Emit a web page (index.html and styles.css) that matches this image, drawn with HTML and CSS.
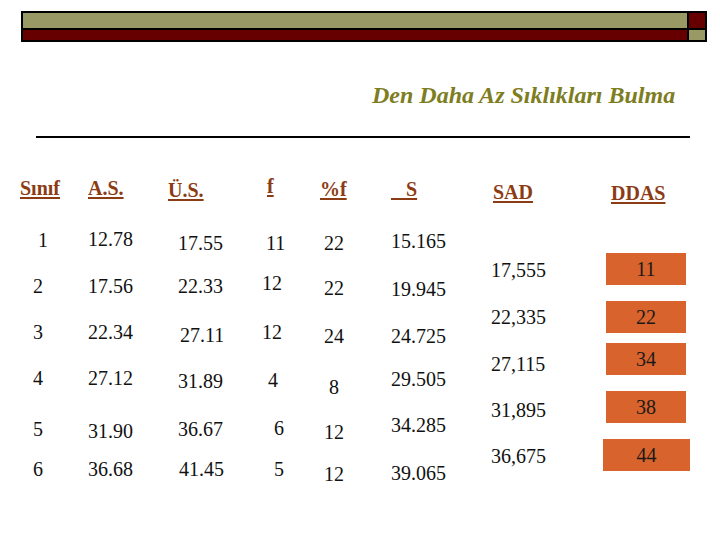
FILE: index.html
```html
<!DOCTYPE html>
<html lang="tr">
<head>
<meta charset="utf-8">
<title>Den Daha Az Sıklıkları Bulma</title>
<link rel="stylesheet" href="styles.css">
</head>
<body>
<div class="slide">
  <div class="topbar">
    <div class="olive"></div>
    <div class="maroon"></div>
    <div class="maroon"></div>
    <div class="olive"></div>
  </div>

  <h1 class="title">Den Daha Az Sıklıkları Bulma</h1>
  <hr class="rule">

  <div class="table">
    <div class="freq">
      <div class="th">Sınıf</div>
      <div class="th">A.S.</div>
      <div class="th y2">Ü.S.</div>
      <div class="th x3 yn2">f</div>
      <div class="th y1">%f</div>
      <div class="th y1">&nbsp;&nbsp;&nbsp;S</div>

      <div class="td c1 one">1</div>
      <div class="td yn1">12.78</div>
      <div class="td c3 y3">17.55</div>
      <div class="td x2 y3">11</div>
      <div class="td c5 y3">22</div>
      <div class="td y1">15.165</div>

      <div class="td c1">2</div>
      <div class="td">17.56</div>
      <div class="td c3">22.33</div>
      <div class="td xn2 yn3">12</div>
      <div class="td c5 y2">22</div>
      <div class="td y3">19.945</div>

      <div class="td c1">3</div>
      <div class="td">22.34</div>
      <div class="td c3 x2 y3">27.11</div>
      <div class="td xn2">12</div>
      <div class="td c5 y4">24</div>
      <div class="td y4">24.725</div>

      <div class="td c1">4</div>
      <div class="td">27.12</div>
      <div class="td c3 y3">31.89</div>
      <div class="td x4 y2">4</div>
      <div class="td c5 x5 y9">8</div>
      <div class="td y1">29.505</div>

      <div class="td c1 y5">5</div>
      <div class="td y7">31.90</div>
      <div class="td c3 y5">36.67</div>
      <div class="td x10 y4">6</div>
      <div class="td c5 y8">12</div>
      <div class="td y1">34.285</div>

      <div class="td c1 yn1">6</div>
      <div class="td yn1">36.68</div>
      <div class="td c3 x1 yn1">41.45</div>
      <div class="td x10 yn1">5</div>
      <div class="td c5 y4">12</div>
      <div class="td y3">39.065</div>
    </div>

    <div class="sad">
      <div class="th">SAD</div>
      <div class="sad-list">
        <div>17,555</div>
        <div>22,335</div>
        <div>27,115</div>
        <div class="yn1">31,895</div>
        <div class="yn1">36,675</div>
      </div>
    </div>

    <div class="ddas">
      <div class="th">DDAS</div>
      <div class="boxes">
        <div class="box">11</div>
        <div class="box">22</div>
        <div class="box pull-up">34</div>
        <div class="box">38</div>
        <div class="box wide">44</div>
      </div>
    </div>
  </div>
</div>
</body>
</html>
```
FILE: styles.css
```css
* { box-sizing: border-box; }

html, body {
  margin: 0;
  padding: 0;
  background: #ffffff;
}

body {
  width: 720px;
  height: 540px;
  overflow: hidden;
  font-family: "Liberation Serif", "Times New Roman", serif;
  color: #111111;
}

/* top decorative bar */
.topbar {
  margin: 11px 0 0 21px;
  width: 686px;
  padding: 2px;
  background: #000000;
  display: grid;
  grid-template-columns: 1fr 16px;
  grid-template-rows: 15px 10px;
  gap: 2px;
}
.olive { background: #999966; }
.maroon { background: #660000; }

/* title */
.title {
  margin: 39px 0 0 372px;
  font-size: 24px;
  line-height: 28px;
  font-weight: bold;
  font-style: italic;
  color: #7d7d22;
  white-space: nowrap;
}

.rule {
  margin: 27px 0 0 36px;
  width: 654px;
  height: 2px;
  border: 0;
  background: #000000;
}

/* table area */
.table {
  display: flex;
  margin: 35px 0 0 20px;
  font-size: 20px;
}

.freq {
  display: grid;
  grid-template-columns: 68px 80px 96px 56px 71px 100px;
  grid-template-rows: 44px repeat(6, 46px);
  align-items: start;
}

.th {
  font-weight: bold;
  color: #8c3c14;
  text-decoration: underline;
  text-decoration-thickness: 2px;
  text-underline-offset: 2px;
  line-height: 30px;
  white-space: pre;
}

.td {
  line-height: 46px;
  white-space: nowrap;
}

/* column indents */
.c1 { padding-left: 13px; }
.c1.one { padding-left: 18px; }
.c3 { padding-left: 10px; }
.c5 { padding-left: 4px; }

/* small nudges of hand-placed values */
.x1 { margin-left: 1px; }
.x2 { margin-left: 2px; }
.x3 { margin-left: 3px; }
.x4 { margin-left: 4px; }
.x5 { margin-left: 5px; }
.x10 { margin-left: 10px; }
.xn2 { margin-left: -2px; }

.yn3 { margin-top: -3px; }
.yn2 { margin-top: -2px; }
.yn1 { margin-top: -1px; }
.y1 { margin-top: 1px; }
.y2 { margin-top: 2px; }
.y3 { margin-top: 3px; }
.y4 { margin-top: 4px; }
.y5 { margin-top: 5px; }
.y7 { margin-top: 7px; }
.y8 { margin-top: 8px; }
.y9 { margin-top: 9px; }

/* SAD column */
.sad {
  width: 112px;
}
.sad .th {
  margin-top: 4px;
  padding-left: 2px;
}
.sad-list {
  margin-top: 40px;
  line-height: 47px;
}

/* DDAS column */
.ddas {
  width: 87px;
}
.ddas .th {
  margin-top: 5px;
  padding-left: 8px;
}
.boxes {
  margin-top: 45px;
  display: flex;
  flex-direction: column;
  gap: 16px;
}
.box {
  margin-left: 3px;
  width: 80px;
  height: 32px;
  line-height: 32px;
  text-align: center;
  background: #d8632c;
  color: #1a1a1a;
}
.box.pull-up { margin-top: -6px; }
.box.wide {
  margin-left: 0;
  width: 87px;
}
```
